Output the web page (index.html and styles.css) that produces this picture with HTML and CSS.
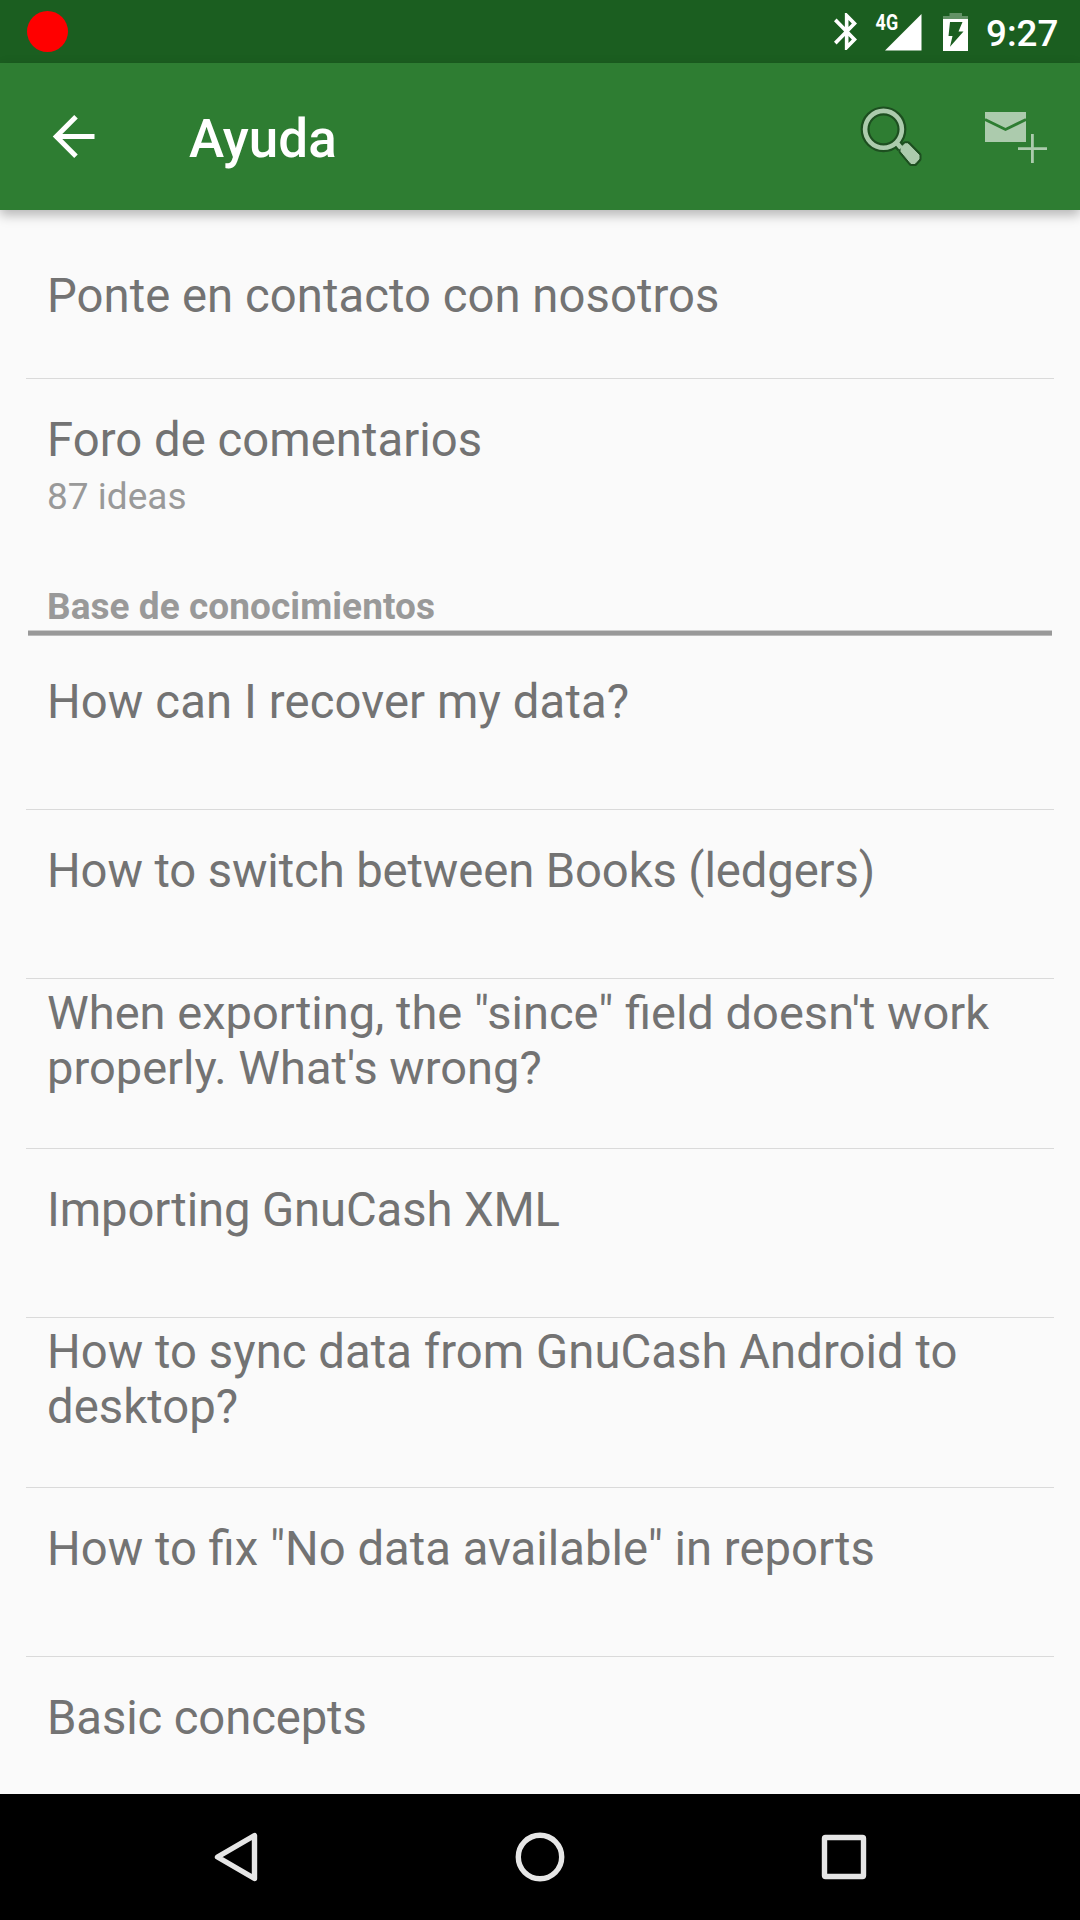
FILE: index.html
```html
<!DOCTYPE html>
<html lang="es">
<head>
<meta charset="utf-8">
<title>Ayuda</title>
<link rel="stylesheet" href="styles.css">
</head>
<body>
<div class="screen">
  <div class="status-bar">
    <span class="record-dot"></span>
    <div class="status-icons">
      <svg class="bluetooth" viewBox="5 2 12.71 20" preserveAspectRatio="none"><path d="M17.71 7.71L12 2h-1v7.59L6.41 5 5 6.41 10.59 12 5 17.59 6.41 19 11 14.41V22h1l5.71-5.71-4.3-4.29 4.3-4.29zM13 5.83l1.88 1.88L13 9.59V5.83zm1.88 10.46L13 18.17v-3.76l1.88 1.88z"/></svg>
      <svg class="signal" viewBox="0 0 46 38"><path d="M9 37.5L45.5 1V37.5z"/><text x="-.4" y="16.500" textLength="22.5" lengthAdjust="spacingAndGlyphs">4G</text></svg>
      <svg class="battery" viewBox="0 0 25 38"><path class="dim" d="M6.500 0H19V3H25V6H0V3H6.500z"/><path fill-rule="evenodd" d="M0 6H25V38H0zM7 9L5.500 23H9.500L7 33.700L20.500 18.500H15.500L19.500 9z"/></svg>
      <span class="clock">9:27</span>
    </div>
  </div>

  <header class="app-bar">
    <svg class="back" viewBox="0 0 44 44"><path d="M42.500 21.500H6M24 1.800L4.300 21.500L24 41.200"/></svg>
    <h1 class="title">Ayuda</h1>
    <svg class="search" viewBox="0 0 62 62">
      <g class="search-edge"><circle cx="23.500" cy="22.300" r="18.400"/><path d="M36 35L41 41"/><path class="grip" d="M41 44.500V40.500L45 36.800H48L59 48V52L55 56.500H51z"/></g>
      <g class="search-face"><circle cx="23.500" cy="22.300" r="18.400"/><path d="M36 35L41 41"/><path class="grip" d="M41 44.500V40.500L45 36.800H48L59 48V52L55 56.500H51z"/></g>
    </svg>
    <svg class="mail" viewBox="0 0 62 52"><path class="mail-body" d="M0 0H41V30H0z"/><path class="mail-flap" d="M0 7.500L20.500 17.500L41 7.500"/><path class="mail-plus" d="M33 36.700H62M47.400 22V51"/></svg>
  </header>

  <main class="list">
    <div class="row contact"><span>Ponte en contacto con nosotros</span></div>
    <div class="row forum"><span>Foro de comentarios</span><span class="detail">87 ideas</span></div>
    <h2 class="section">Base de conocimientos</h2>
    <div class="row first"><span>How can I recover my data?</span></div>
    <div class="row snug"><span>How to switch between Books (ledgers)</span></div>
    <div class="row double long"><span>When exporting, the "since" field doesn't work properly. What's wrong?</span></div>
    <div class="row snug"><span>Importing GnuCash XML</span></div>
    <div class="row double"><span>How to sync data from GnuCash Android to desktop?</span></div>
    <div class="row even"><span>How to fix "No data available" in reports</span></div>
    <div class="row last snug"><span>Basic concepts</span></div>
  </main>

  <nav class="nav-bar">
    <svg viewBox="0 0 54 54"><path d="M8.500 27L45.500 5.500V48.500z"/></svg>
    <svg viewBox="0 0 54 54"><circle cx="27" cy="27" r="21.700"/></svg>
    <svg viewBox="0 0 54 54"><rect x="7.500" y="7.500" width="39" height="39" rx="1"/></svg>
  </nav>
</div>
</body>
</html>
```
FILE: styles.css
```css
* { box-sizing: border-box; }
body { margin: 0; font-family: Roboto, sans-serif; }
svg { display: block; flex: none; overflow: visible; }

.screen {
  width: 1080px;
  height: 1920px;
  overflow: hidden;
  display: flex;
  flex-direction: column;
  background: #fafafa;
}

.status-bar {
  flex: none;
  height: 63px;
  padding: 0 22px 0 27px;
  display: flex;
  align-items: center;
  justify-content: space-between;
  background: #1b5e20;
}
.record-dot { width: 41px; height: 41px; border-radius: 50%; background: #f00; }
.status-icons { display: flex; align-items: center; fill: #fff; }
.bluetooth { width: 23px; height: 37px; margin-right: 19px; }
.signal { width: 46px; height: 38px; margin-right: 21px; }
.signal text { font-size: 22px; font-weight: 700; }
.battery { width: 25px; height: 38px; margin-right: 18px; }
.battery .dim { fill: #639266; }
.clock { width: 72px; font-size: 36.75px; font-weight: 500; line-height: 44px; padding-top: 4px; color: #fff; white-space: nowrap; }

.app-bar {
  flex: none;
  position: relative;
  height: 147px;
  padding: 0 33px 0 52px;
  display: flex;
  align-items: center;
  background: #2e7d32;
  box-shadow: 0 5px 11px rgba(0, 0, 0, .28);
}
.back { width: 44px; height: 44px; fill: none; stroke: #fff; stroke-width: 5; }
.title { margin: 4px auto 0 93px; font-size: 53px; line-height: 62px; font-weight: 500; color: #fff; }
.search { width: 62px; height: 62px; margin: 2px 63px 0 0; fill: none; }
.search-edge { stroke: #1d4f20; stroke-width: 9; stroke-linejoin: round; }
.search-face { stroke: #accbad; stroke-width: 4.6; }
.search-edge .grip { stroke-width: 5; }
.search-face .grip { fill: #accbad; stroke-width: 1; }
.mail { width: 62px; height: 52px; margin-top: 2px; fill: none; }
.mail-body { fill: #accbad; }
.mail-flap { stroke: #2e7d32; stroke-width: 2.8; }
.mail-plus { stroke: #accbad; stroke-width: 2.8; }

.list { flex: 1; min-height: 0; padding: 0 26px; overflow: hidden; }
.row {
  height: 169.4px;
  padding: 34px 21px 0;
  border-bottom: 1px solid #dadada;
  font-size: 47.25px;
  line-height: 55px;
  letter-spacing: .04px;
  color: #737373;
}
.row span { display: block; }
.row.snug { letter-spacing: -.12px; }
.row.even { letter-spacing: normal; }
.row.contact { height: 169px; padding-top: 59px; }
.row.forum { height: 206px; border-bottom: 0; }
.row .detail { margin-top: 7px; font-size: 37px; line-height: 44px; letter-spacing: 0; color: #999; }
.section {
  height: 51px;
  margin: 0 2px;
  padding-left: 19px;
  background: linear-gradient(#ccc 1px, #999 1px 5px, #bbb 5px) 0 100% / 100% 6px no-repeat;
  font-size: 37px;
  line-height: 44px;
  letter-spacing: .05px;
  font-weight: 700;
  color: #999;
}
.row.first { height: 174px; padding-top: 39px; letter-spacing: .11px; }
.row.double { padding-top: 7px; }
.row.long { padding-top: 6px; font-size: 47.05px; letter-spacing: normal; }
.row.last { border-bottom: 0; }

.nav-bar {
  flex: none;
  height: 126px;
  padding: 0 209px;
  display: flex;
  align-items: center;
  justify-content: space-between;
  background: #000;
}
.nav-bar svg { width: 54px; height: 54px; fill: none; stroke: #e6e6e6; stroke-width: 5.4; stroke-linejoin: round; }
```
